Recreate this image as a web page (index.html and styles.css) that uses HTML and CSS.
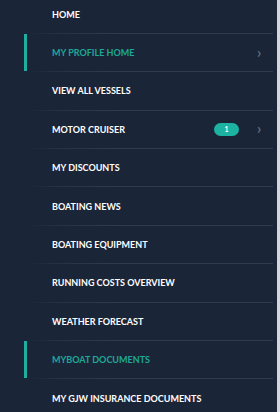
FILE: index.html
```html
<!DOCTYPE html>
<html>
    <head>
        <title>Menu</title>
        <link rel="stylesheet" href="styles.css">
    </head>
    <body>
        <nav class="side-menu">
            <ul class="menu-list">
                <li class="menu-item first"><a href="#">HOME</a></li>
                <li class="menu-item active"><a href="#">MY PROFILE HOME</a><span class="chevron">&#8250;</span></li>
                <li class="menu-item"><a href="#">VIEW ALL VESSELS</a></li>
                <li class="menu-item"><a href="#">MOTOR CRUISER</a><span class="badge">1</span><span class="chevron">&#8250;</span></li>
                <li class="menu-item"><a href="#">MY DISCOUNTS</a></li>
                <li class="menu-item"><a href="#">BOATING NEWS</a></li>
                <li class="menu-item"><a href="#">BOATING EQUIPMENT</a></li>
                <li class="menu-item"><a href="#">RUNNING COSTS OVERVIEW</a></li>
                <li class="menu-item"><a href="#">WEATHER FORECAST</a></li>
                <li class="menu-item active"><a href="#">MYBOAT DOCUMENTS</a></li>
                <li class="menu-item"><a href="#">MY GJW INSURANCE DOCUMENTS</a></li>
            </ul>
        </nav>
    </body>
</html>
```

FILE: styles.css
```css
body {
    margin: 0;
    background-color: #d3d7dc;
    font-family: Lato, "Open Sans", sans-serif;
    overflow: hidden;
}
.side-menu {
    width: 277px;
    height: 412px;
    background-color: #1a2537;
    overflow: hidden;
}
.menu-list {
    list-style: none;
    margin: -4.5px 0 0 0;
    padding: 0;
}
.menu-item {
    position: relative;
    display: flex;
    align-items: center;
    height: 37.4px;
    padding: 0 0 0 52px;
    border-bottom: 1px solid transparent;
    border-image: linear-gradient(to right, rgba(46, 60, 80, 0) 28px, rgba(46, 60, 80, 0.6) 60px, #2e3c50 120px, #2e3c50 272px, transparent 272px) 1;
}
.menu-item a {
    color: #ffffff;
    text-decoration: none;
    font-size: 9px;
    font-weight: bold;
    flex: 1;
}
.menu-item.active::before {
    content: "";
    position: absolute;
    left: 24px;
    top: 0;
    bottom: 0;
    width: 3px;
    background-color: #1fae9f;
}
.menu-item.active a {
    color: #1fa898;
}
.badge {
    width: 25px;
    height: 13px;
    border-radius: 7px;
    background-color: #1db3a3;
    color: #ffffff;
    font-size: 7px;
    font-weight: bold;
    text-align: center;
    line-height: 13px;
    margin-right: 18px;
}
.chevron {
    color: #5f6b7c;
    font-size: 15px;
    font-weight: bold;
    width: 20px;
    margin-bottom: 2px;
}
```
